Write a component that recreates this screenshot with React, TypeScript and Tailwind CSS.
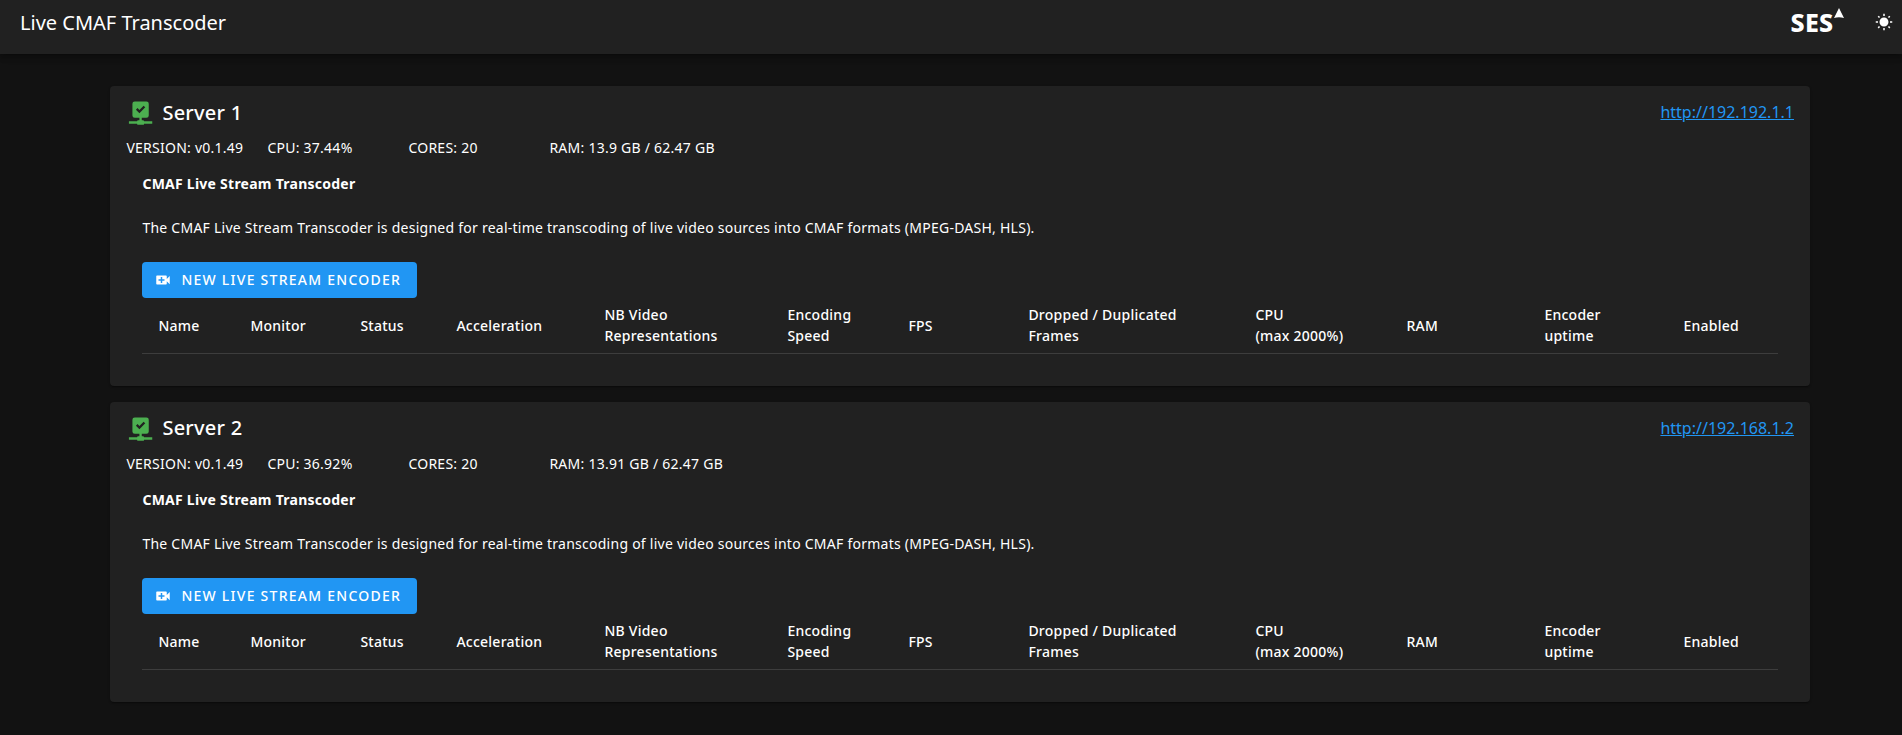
import React from "react";

type Server = { name: string; url: string; version: string; cpu: string; cores: number; ram: string };

const servers: Server[] = [
  { name: "Server 1", url: "http://192.192.1.1", version: "v0.1.49", cpu: "37.44%", cores: 20, ram: "13.9 GB / 62.47 GB" },
  { name: "Server 2", url: "http://192.168.1.2", version: "v0.1.49", cpu: "36.92%", cores: 20, ram: "13.91 GB / 62.47 GB" },
];

const columns: { lines: string[]; width: string }[] = [
  { lines: ["Name"], width: "w-[92px]" },
  { lines: ["Monitor"], width: "w-[110px]" },
  { lines: ["Status"], width: "w-[96px]" },
  { lines: ["Acceleration"], width: "w-[148px]" },
  { lines: ["NB Video", "Representations"], width: "w-[183px]" },
  { lines: ["Encoding", "Speed"], width: "w-[121px]" },
  { lines: ["FPS"], width: "w-[120px]" },
  { lines: ["Dropped / Duplicated", "Frames"], width: "w-[227px]" },
  { lines: ["CPU", "(max 2000%)"], width: "w-[151px]" },
  { lines: ["RAM"], width: "w-[138px]" },
  { lines: ["Encoder", "uptime"], width: "w-[139px]" },
  { lines: ["Enabled"], width: "w-[111px]" },
];

function Icon({ d, className, viewBox = "0 0 24 24" }: { d: string; className: string; viewBox?: string }) {
  return (
    <svg viewBox={viewBox} fill="currentColor" className={className}>
      <path d={d} fillRule="evenodd" />
    </svg>
  );
}

const checkNetwork =
  "M17 3A2 2 0 0 1 19 5V15A2 2 0 0 1 17 17H13V19H14A1 1 0 0 1 15 20H22V22H15A1 1 0 0 1 14 23H10A1 1 0 0 1 9 22H2V20H9A1 1 0 0 1 10 19H11V17H7A2 2 0 0 1 5 15V5A2 2 0 0 1 7 3H17M11 13L16 8L14.6 6.6L11 10.2L9.4 8.6L8 10L11 13Z";
const videoPlus =
  "M17 10.5V7A1 1 0 0 0 16 6H4A1 1 0 0 0 3 7V17A1 1 0 0 0 4 18H16A1 1 0 0 0 17 17V13.5L21 17.5V6.5L17 10.5M14 13H11V16H9V13H6V11H9V8H11V11H14V13Z";
const sunny =
  "M3.55 19.09L4.96 20.5L6.76 18.71L5.34 17.29M12 6C8.69 6 6 8.69 6 12S8.69 18 12 18 18 15.31 18 12C18 8.68 15.31 6 12 6M20 13H23V11H20M17.24 18.71L19.04 20.5L20.45 19.09L18.66 17.29M20.45 5L19.04 3.6L17.24 5.39L18.66 6.81M13 1H11V4H13M6.76 5.39L4.96 3.6L3.55 5L5.34 6.81L6.76 5.39M1 13H4V11H1M13 20H11V23H13";

function Logo() {
  return (
    <div className="flex items-start">
      <span className="mt-[2px] w-[43.5px] text-[25px] leading-6 font-extrabold tracking-[.3px]">SES</span>
      <svg viewBox="0 0 10 10" className="h-[10px] w-[10px]" fill="currentColor">
        <path d="M5 0L10 10Q5 8.4 0 10Z" />
      </svg>
    </div>
  );
}

function ServerCard({ s }: { s: Server }) {
  return (
    <section className="h-[300px] rounded bg-[#212121] shadow-[0_2px_1px_-1px_rgba(0,0,0,.2),0_1px_1px_rgba(0,0,0,.14),0_1px_3px_rgba(0,0,0,.12)]">
      <div className="flex h-[52px] justify-between px-4 pt-[10px]">
        <div className="flex">
          <Icon d={checkNetwork} viewBox="-.5 0 24 24" className="mt-[2px] h-7 w-7 text-[#4caf50]" />
          <h2 className="ml-2 pt-[.5px] text-[20px] leading-8 font-medium tracking-[.25px]">{s.name}</h2>
        </div>
        <a href={s.url} className="text-[16px] leading-8 text-[#2196f3] underline">{s.url}</a>
      </div>
      <div className="flex h-5 px-4 text-[14px] leading-5 tracking-[.25px] [&>span]:w-[141px] [&>span]:whitespace-nowrap">
        <span>VERSION: {s.version}</span>
        <span>CPU: {s.cpu}</span>
        <span>CORES: {s.cores}</span>
        <span>RAM: {s.ram}</span>
      </div>
      <div className="px-8 pt-4 text-[14px] leading-5 tracking-[.25px]">
        <p className="font-bold">CMAF Live Stream Transcoder</p>
        <p className="mt-6">
          The CMAF Live Stream Transcoder is designed for real-time transcoding of live video sources into CMAF formats (MPEG-DASH, HLS).
        </p>
        <button className="mt-6 flex h-9 w-[275px] items-center rounded bg-[#2196f3] pl-3 text-[14px] font-medium tracking-[1.25px] whitespace-nowrap">
          <Icon d={videoPlus} className="mr-[9px] h-[18px] w-[18px] shrink-0" />
          NEW LIVE STREAM ENCODER
        </button>
        <table className="w-full table-fixed border-separate border-spacing-0 text-left text-[14px] leading-[21px]">
          <thead>
            <tr>
              {columns.map((c) => (
                <th
                  key={c.lines[0]}
                  className={`${c.width} ${c.lines.length > 1 ? "pb-px" : "pb-0"} h-14 border-b border-[#3d3d3d] pt-0 pr-0 pl-4 align-middle font-medium whitespace-nowrap`}
                >
                  {c.lines.map((l) => (
                    <div key={l}>{l}</div>
                  ))}
                </th>
              ))}
            </tr>
          </thead>
        </table>
      </div>
    </section>
  );
}

export default function App() {
  return (
    <div className="h-[735px] overflow-hidden bg-[#121212] font-['Noto_Sans',sans-serif] text-white">
      <header className="flex h-[54px] justify-between bg-[#212121] pr-[9px] pl-5 shadow-[0_2px_4px_-1px_rgba(0,0,0,.2),0_4px_5px_rgba(0,0,0,.14),0_1px_10px_rgba(0,0,0,.12)]">
        <h1 className="pt-2 text-[20px] leading-[30px] font-normal">Live CMAF Transcoder</h1>
        <div className="flex">
          <div className="mr-[31px] pt-2"><Logo /></div>
          <Icon d={sunny} className="mt-[13px] h-[18px] w-[18px]" />
        </div>
      </header>
      <main className="ml-[110.4px] flex w-[1699.6px] flex-col gap-[15.8px] pt-8">
        {servers.map((s) => (
          <ServerCard key={s.name} s={s} />
        ))}
      </main>
    </div>
  );
}
